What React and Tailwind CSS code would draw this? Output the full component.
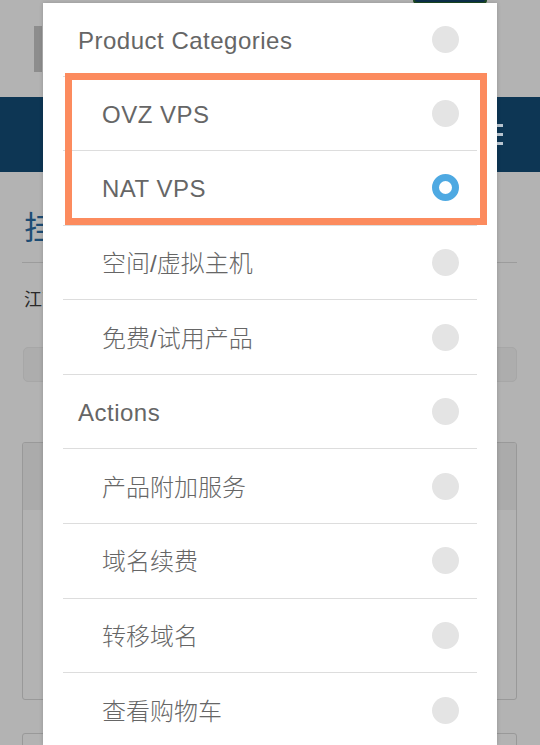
import React from "react";

const rows = [
  { label: "Product Categories", level: 0, first: true, latin: true },
  { label: "OVZ VPS", level: 1, latin: true },
  { label: "NAT VPS", level: 1, selected: true, latin: true },
  { label: "空间/虚拟主机", level: 1 },
  { label: "免费/试用产品", level: 1 },
  { label: "Actions", level: 0, latin: true },
  { label: "产品附加服务", level: 1 },
  { label: "域名续费", level: 1 },
  { label: "转移域名", level: 1 },
  { label: "查看购物车", level: 1 },
];

function Radio({ selected }) {
  return selected ? (
    <span className="block w-[27px] h-[27px] rounded-full border-[7px] border-[#4ea9e2] bg-white shrink-0" />
  ) : (
    <span className="block w-[27px] h-[27px] rounded-full bg-[#e4e4e4] shrink-0" />
  );
}

export default function App() {
  const font = { fontFamily: '"Liberation Sans", "Noto Sans CJK SC", Arial, sans-serif' };
  return (
    <div className="relative w-[540px] h-[745px] overflow-hidden bg-[#b3b3b3]" style={font}>
      {/* dimmed background page */}
      <div className="h-[97px] flex items-start">
        <div className="ml-[34px] mt-[26px] w-[8px] h-[46px] bg-[#8d8d8d]" />
        <div className="ml-auto mr-[53px] w-[74px] h-[4px] bg-[#0c2f4a] border-x-2 border-b-2 border-[#1d4a22] rounded-b-md" />
      </div>
      <div className="h-[75px] bg-[#0d3654] flex flex-col items-end justify-center gap-[6.5px] pr-[37px]">
        <div className="w-[20px] h-[2.5px] bg-[#b9c5d0]" />
        <div className="w-[20px] h-[2.5px] bg-[#b9c5d0]" />
        <div className="w-[20px] h-[2.5px] bg-[#b9c5d0]" />
      </div>
      <div className="ml-[22px] mr-[23px]">
        <div className="pt-[36px] pb-[14px] border-b border-[#9c9c9c]">
          <div className="text-[32px] leading-[40px] text-[#1d4c74] pl-[2px]">挂机宝</div>
        </div>
        <div className="mt-[23px] text-[18px] leading-[28px] text-[#2a2a2a] pl-[2px]">江苏宿迁NAT挂机宝</div>
        <div className="mt-[33px] ml-[1px] h-[35px] rounded-[5px] bg-[#adadad] border border-[#a7a7a7]" />
        <div className="mt-[60px] h-[258px] rounded-[3px] border border-[#999999] overflow-hidden">
          <div className="h-[67px] bg-[#ababab]" />
        </div>
        <div className="mt-[33px] h-[100px] rounded-[3px] border border-[#999999]" />
      </div>

      {/* modal dialog */}
      <div className="absolute left-[43px] top-[3px] w-[454px] bottom-0 bg-white shadow-[0_0_4px_rgba(0,0,0,0.18)] px-[20px]">
        {rows.map((r, i) => (
          <div
            key={i}
            className={
              "flex items-center justify-between pr-[18px] " +
              (r.first ? "h-[72.5px]" : "h-[74.6px] border-t border-[#dddddd]") +
              (r.level === 0 ? " pl-[15px]" : " pl-[39px]")
            }
          >
            <span
              className={
                "text-[24px] leading-[28px] text-[#666666] pt-[3px] " +
                (r.latin ? "tracking-[0.5px]" : "font-light")
              }
            >
              {r.label}
            </span>
            <Radio selected={r.selected} />
          </div>
        ))}
      </div>

      {/* annotation highlight */}
      <div className="absolute left-[65px] top-[73px] w-[422px] h-[152px] border-[7px] border-[#fc8b5e]" />
    </div>
  );
}
